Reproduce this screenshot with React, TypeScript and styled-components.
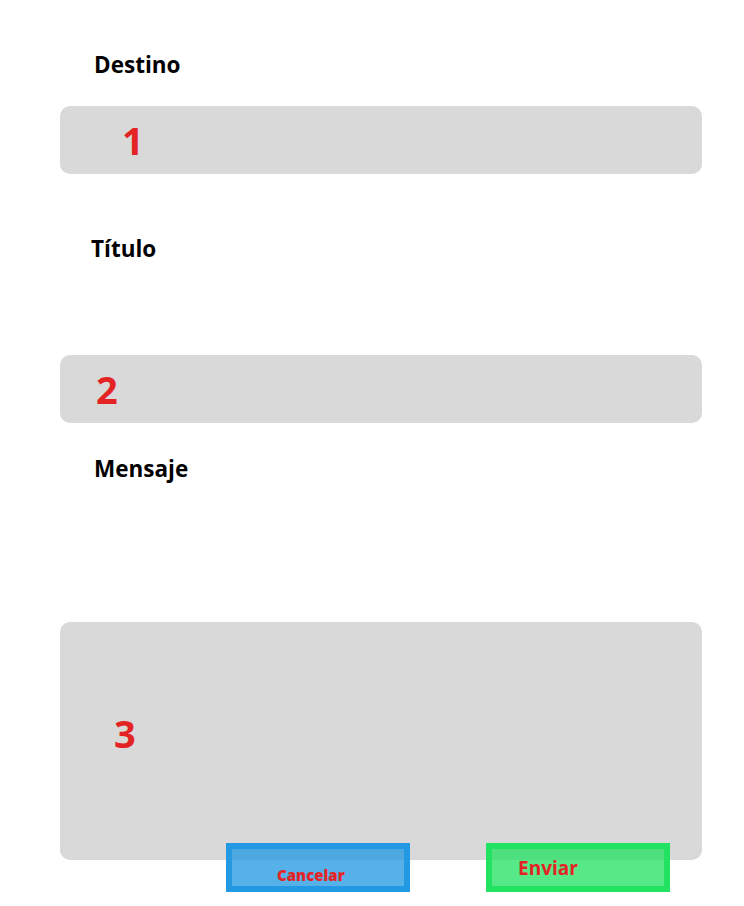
import React from "react";
import styled, { createGlobalStyle } from "styled-components";

const Global = createGlobalStyle`
  html, body { margin: 0; padding: 0; background: #ffffff; }
  body { font-family: "Open Sans", "Noto Sans", sans-serif; }
`;

const Page = styled.div`
  width: 744px;
  box-sizing: border-box;
  padding: 50px 42px 0 60px;
  display: flex;
  flex-direction: column;
`;

const Label = styled.div<{ $indent: number; $top: number }>`
  margin-top: ${(p) => p.$top}px;
  padding-left: ${(p) => p.$indent}px;
  font-size: 22.5px;
  line-height: 30px;
  font-weight: 700;
  color: #000000;
`;

const InputBox = styled.div<{ $top: number; $height: number; $indent: number; $padTop?: number }>`
  margin-top: ${(p) => p.$top}px;
  height: ${(p) => p.$height}px;
  box-sizing: border-box;
  background: #d9d9d9;
  border-radius: 10px;
  padding-left: ${(p) => p.$indent}px;
  padding-top: ${(p) => p.$padTop ?? 0}px;
  display: flex;
  align-items: ${(p) => (p.$padTop ? "flex-start" : "center")};
`;

const Numeral = styled.span`
  font-size: 38px;
  font-weight: 700;
  color: #e42424;
  line-height: normal;
`;

const ButtonRow = styled.div`
  margin-top: -17px;
  padding-left: 166px;
  display: flex;
  gap: 76px;
`;

const ActionButton = styled.button<{
  $border: string;
  $fill: string;
  $size: number;
  $padLeft: number;
  $padTop: number;
  $weight: number;
}>`
  width: 184px;
  height: 49px;
  box-sizing: border-box;
  border: 6px solid ${(p) => p.$border};
  background: ${(p) => p.$fill};
  margin: 0;
  padding: ${(p) => p.$padTop}px 0 0 ${(p) => p.$padLeft}px;
  text-align: left;
  display: block;
  font-family: "Open Sans", "Noto Sans", sans-serif;
  font-size: ${(p) => p.$size}px;
  font-weight: ${(p) => p.$weight};
  line-height: normal;
  color: #e42424;
  cursor: pointer;
  white-space: nowrap;
`;

export default function App() {
  return (
    <>
      <Global />
      <Page>
        <Label $indent={34} $top={0}>Destino</Label>
        <InputBox $top={26} $height={68} $indent={62}>
          <Numeral>1</Numeral>
        </InputBox>
        <Label $indent={31} $top={60}>Título</Label>
        <InputBox $top={91} $height={68} $indent={36}>
          <Numeral>2</Numeral>
        </InputBox>
        <Label $indent={34} $top={31}>Mensaje</Label>
        <InputBox $top={138} $height={238} $indent={54} $padTop={85}>
          <Numeral>3</Numeral>
        </InputBox>
        <ButtonRow>
          <ActionButton
            $border="#2299e2"
            $fill="rgba(34,153,226,0.76)"
            $size={15}
            $padLeft={45}
            $padTop={15}
            $weight={800}
          >
            Cancelar
          </ActionButton>
          <ActionButton
            $border="#22e262"
            $fill="rgba(34,226,98,0.76)"
            $size={19}
            $padLeft={26}
            $padTop={1}
            $weight={700}
          >
            Enviar
          </ActionButton>
        </ButtonRow>
      </Page>
    </>
  );
}
